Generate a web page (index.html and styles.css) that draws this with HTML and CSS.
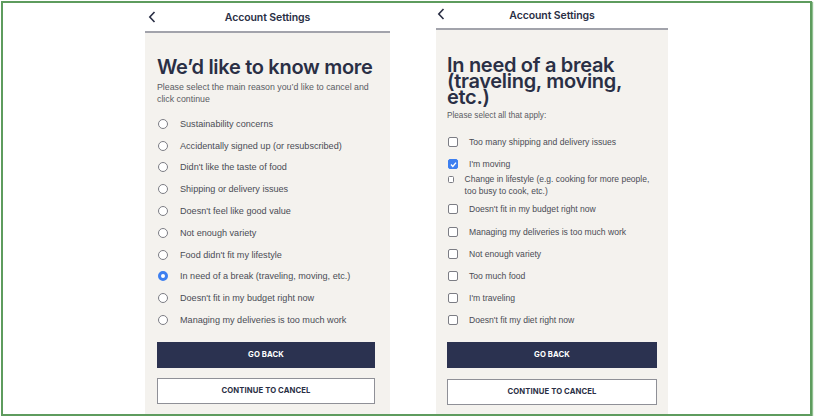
FILE: index.html
```html
<!DOCTYPE html>
<html lang="en">

<head>
    <meta charset="UTF-8" />
    <meta name="viewport" content="width=device-width, initial-scale=1.0" />
    <title>Account Settings</title>
    <link rel="stylesheet" href="styles.css">
</head>

<body>
    <div class="frame">
        <div class="phone phone-left">
            <div class="topbar">
                <svg class="back" width="8" height="12" viewBox="0 0 8 12"><path d="M6.5 1 L1.8 6 L6.5 11" fill="none" stroke="#2a2f45" stroke-width="1.6" /></svg>
                <span class="topbar-title">Account Settings</span>
            </div>
            <div class="panel">
                <h1 class="title">We’d like to know more</h1>
                <p class="subtitle">Please select the main reason you’d like to cancel and click continue</p>
                <ul class="options">
                    <li><span class="radio"></span>Sustainability concerns</li>
                    <li><span class="radio"></span>Accidentally signed up (or resubscribed)</li>
                    <li><span class="radio"></span>Didn't like the taste of food</li>
                    <li><span class="radio"></span>Shipping or delivery issues</li>
                    <li><span class="radio"></span>Doesn't feel like good value</li>
                    <li><span class="radio"></span>Not enough variety</li>
                    <li><span class="radio"></span>Food didn't fit my lifestyle</li>
                    <li><span class="radio checked"></span>In need of a break (traveling, moving, etc.)</li>
                    <li><span class="radio"></span>Doesn't fit in my budget right now</li>
                    <li><span class="radio"></span>Managing my deliveries is too much work</li>
                </ul>
                <button class="btn btn-dark">GO BACK</button>
                <button class="btn btn-light">CONTINUE TO CANCEL</button>
            </div>
        </div>

        <div class="phone phone-right">
            <div class="topbar">
                <svg class="back" width="8" height="12" viewBox="0 0 8 12"><path d="M6.5 1 L1.8 6 L6.5 11" fill="none" stroke="#2a2f45" stroke-width="1.6" /></svg>
                <span class="topbar-title">Account Settings</span>
            </div>
            <div class="panel">
                <h1 class="title title-multi">In need of a break (traveling, moving, etc.)</h1>
                <p class="subtitle">Please select all that apply:</p>
                <ul class="options checks">
                    <li><span class="box"></span>Too many shipping and delivery issues</li>
                    <li><span class="box checked"><svg width="9" height="9" viewBox="0 0 9 9"><path d="M2 4.6 L3.8 6.4 L7 2.6" fill="none" stroke="#fff" stroke-width="1.4" /></svg></span>I'm moving</li>
                    <li class="small"><span class="box mini"></span>Change in lifestyle (e.g. cooking for more people, too busy to cook, etc.)</li>
                    <li><span class="box"></span>Doesn't fit in my budget right now</li>
                    <li><span class="box"></span>Managing my deliveries is too much work</li>
                    <li><span class="box"></span>Not enough variety</li>
                    <li><span class="box"></span>Too much food</li>
                    <li><span class="box"></span>I'm traveling</li>
                    <li><span class="box"></span>Doesn't fit my diet right now</li>
                </ul>
                <button class="btn btn-dark">GO BACK</button>
                <button class="btn btn-light">CONTINUE TO CANCEL</button>
            </div>
        </div>
    </div>
</body>

</html>
```

FILE: styles.css
```css
body {
    margin: 0;
    background: #ffffff;
    font-family: "Liberation Sans", Arial, sans-serif;
    color: #2a2f45;
}

.frame {
    box-sizing: border-box;
    margin: 1px 0 0 1px;
    width: 811px;
    height: 415px;
    border: 2px solid #5e9c5e;
    box-shadow: 1px 1px 1px #8fbf8f;
    display: flex;
    align-items: stretch;
}

.phone {
    display: flex;
    flex-direction: column;
}

.phone-left {
    width: 245px;
    margin-left: 142px;
}

.phone-right {
    width: 232px;
    margin-left: 46px;
}

.topbar {
    position: relative;
    display: flex;
    align-items: center;
    justify-content: center;
    height: 28px;
    border-bottom: 2px solid #a2a3ab;
}

.phone-right .topbar {
    height: 25px;
}

.back {
    position: absolute;
    left: 3px;
    top: 8px;
}

.phone-right .back {
    top: 5px;
    left: 1px;
}

.topbar-title {
    font-family: Inter, sans-serif;
    font-size: 10.5px;
    font-weight: 600;
    letter-spacing: -0.1px;
}

.panel {
    flex: 1;
    background: #f4f2ee;
    padding: 22px 15px 0 12px;
}

.phone-right .panel {
    padding: 24px 11px 0 11px;
}

.title {
    margin: 0;
    font-family: Inter, sans-serif;
    font-size: 20px;
    font-weight: 600;
    letter-spacing: -0.3px;
    line-height: 24px;
    color: #2a2f45;
}

.title-multi {
    line-height: 16px;
    padding-top: 3px;
}

.subtitle {
    margin: 2px 0 0;
    font-size: 8.8px;
    line-height: 12px;
    color: #5a5c63;
}

.phone-right .subtitle {
    margin-top: 5px;
    font-size: 8.2px;
}

.options {
    list-style: none;
    margin: 8px 0 0;
    padding: 0;
}

.options li {
    display: flex;
    align-items: center;
    height: 21.8px;
    font-size: 9.1px;
    color: #4a4c55;
}

.radio {
    box-sizing: border-box;
    width: 10px;
    height: 10px;
    margin: 0 12px 0 1px;
    border: 1px solid #7c7d84;
    border-radius: 50%;
    background: #ffffff;
}

.radio.checked {
    border: 3px solid #3d7ff0;
}

.checks {
    margin-top: 9px;
}

.checks li {
    height: 22.2px;
    font-size: 8.6px;
}

.box {
    box-sizing: border-box;
    display: flex;
    width: 10px;
    height: 10px;
    margin: 0 11px 0 1px;
    border: 1px solid #7c7d84;
    border-radius: 2px;
    background: #ffffff;
}

.box.checked {
    border-color: #3d7ff0;
    background: #3d7ff0;
}

.box.checked svg {
    margin: -0.5px;
}

.checks li.small {
    height: 25px;
    margin-top: -2px;
    align-items: flex-start;
    line-height: 12px;
    font-size: 8.5px;
}

.box.mini {
    width: 7px;
    height: 7px;
    margin: 3px 11px 0 1px;
    border-radius: 1.5px;
}

.btn {
    display: block;
    box-sizing: border-box;
    width: 100%;
    height: 26px;
    font-family: Inter, sans-serif;
    font-size: 7.7px;
    font-weight: 700;
    letter-spacing: 0.1px;
    border-radius: 0;
}

.btn-dark {
    margin-top: 11px;
    background: #2b3250;
    color: #ffffff;
    border: none;
}

.btn-light {
    margin-top: 10px;
    background: #ffffff;
    color: #2a2f45;
    border: 1px solid #8f9097;
}

.phone-right .btn-dark {
    margin-top: 10px;
}

.phone-right .btn-light {
    margin-top: 11px;
}
```
